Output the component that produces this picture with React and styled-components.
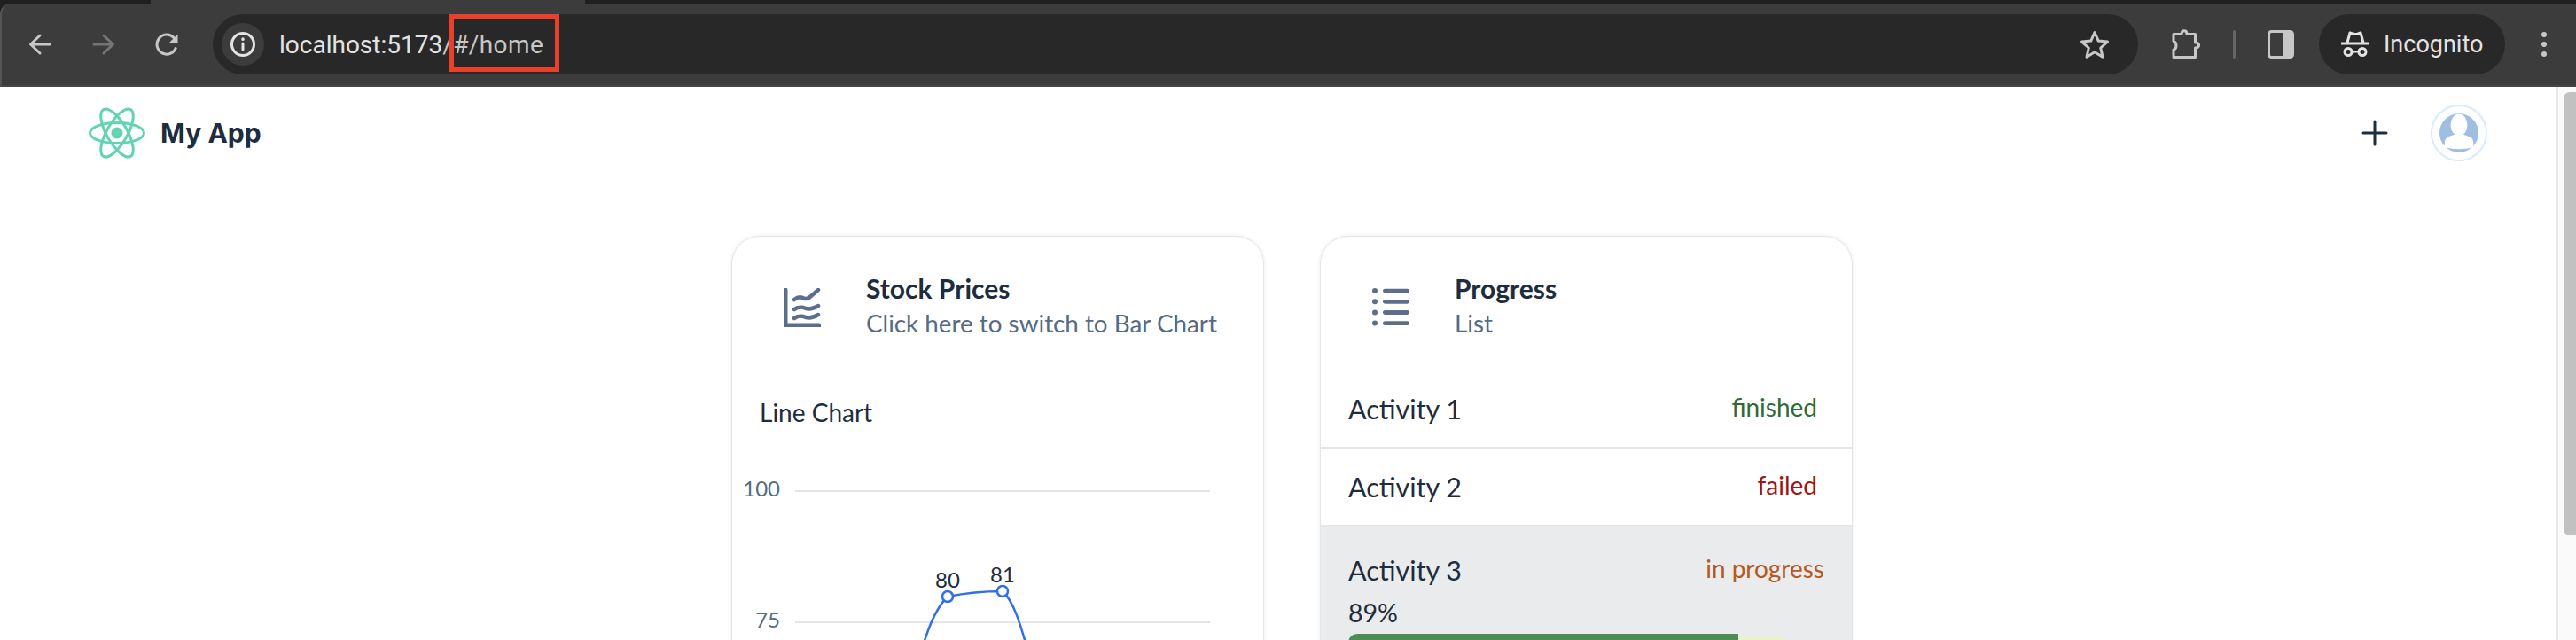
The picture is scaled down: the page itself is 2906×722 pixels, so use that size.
import React from 'react'
import styled, { createGlobalStyle } from 'styled-components'

const GlobalStyle = createGlobalStyle`
  html, body { margin: 0; padding: 0; background: #fff; overflow: hidden; }
  #root { height: 722px; }
`

const Page = styled.div`
  width: 2906px;
  height: 722px;
  overflow: hidden;
  display: flex;
  flex-direction: column;
  font-family: Lato, "Noto Sans", sans-serif;
`

// browser chrome
const Frame = styled.div`
  flex: none;
  background: #1f2120;
`
const TabEdge = styled.div`
  height: 4px;
  margin-left: 170px;
  width: 490px;
  background: #3c3c3c;
`
const Toolbar = styled.div`
  height: 92px;
  background: #3c3c3c;
  border-top-left-radius: 12px;
  border-left: 2px solid #555;
  border-bottom: 2px solid #454545;
  display: flex;
  align-items: center;
  padding-left: 7px;
`
const NavButton = styled.div`
  width: 72px;
  height: 48px;
  display: flex;
  align-items: center;
  justify-content: center;
  flex: none;
`
const Omnibox = styled.div`
  position: relative;
  flex: none;
  width: 2172px;
  height: 68px;
  margin-left: 15px;
  border-radius: 34px;
  background: #282828;
  display: flex;
  align-items: center;
  padding: 0 31px 0 10px;
  box-sizing: border-box;
`
const InfoBadge = styled.div`
  width: 48px;
  height: 48px;
  border-radius: 50%;
  background: #3c3c3c;
  display: flex;
  align-items: center;
  justify-content: center;
`
const Url = styled.div`
  flex: 1;
  margin-left: 17px;
  font-family: Roboto, sans-serif;
  font-size: 28px;
  color: #e3e3e3;
`
const UrlPath = styled.span`
  color: #c7c7c7;
  letter-spacing: 0.4px;
`
const Annotation = styled.div`
  position: absolute;
  left: 267px;
  top: 0;
  width: 124px;
  height: 65px;
  box-sizing: border-box;
  border: 5px solid #e8402a;
`
const ToolIcon = styled.div`
  flex: none;
  display: flex;
  margin-left: ${p => p.$gap}px;
`
const Separator = styled.div`
  flex: none;
  width: 3px;
  height: 32px;
  border-radius: 2px;
  margin-left: 33px;
  background: #666;
`
const IncognitoPill = styled.div`
  flex: none;
  width: 210px;
  height: 68px;
  margin-left: 28px;
  border-radius: 34px;
  background: #282828;
  display: flex;
  align-items: center;
  padding-left: 25px;
  box-sizing: border-box;
  gap: 16px;
  font-family: Roboto, sans-serif;
  font-size: 27px;
  color: #e3e3e3;
`
const Kebab = styled.div`
  flex: none;
  margin-left: 41px;
  display: flex;
  flex-direction: column;
  gap: 5px;
`
const KebabDot = styled.span`
  width: 6px;
  height: 6px;
  border-radius: 50%;
  background: #c7c7c7;
`

// app
const Viewport = styled.div`
  flex: 1;
  min-height: 0;
  display: flex;
`
const Content = styled.div`
  flex: 1;
  min-width: 0;
`
const ScrollTrack = styled.div`
  flex: none;
  width: 22px;
  box-sizing: border-box;
  background: #fafafa;
  border-left: 2px solid #e8e8e8;
  padding: 6px 0 0 6px;
`
const ScrollThumb = styled.div`
  height: 500px;
  border-radius: 7px 0 0 7px;
  background: #c1c1c1;
`
const AppBar = styled.header`
  height: 104px;
  display: flex;
  align-items: center;
  padding: 0 77px 0 100px;
`
const Brand = styled.div`
  flex: 1;
  display: flex;
  align-items: center;
  gap: 17px;
  font-family: Inter, sans-serif;
  font-weight: 700;
  font-size: 30px;
  color: #1d2d3e;
`
const AddButton = styled.div`
  display: flex;
  margin-right: 47px;
`
const Cards = styled.main`
  display: flex;
  gap: 63px;
  padding: 64px 0 0 825px;
`
const Card = styled.section`
  width: 601px;
  height: 700px;
  box-sizing: border-box;
  flex: none;
  border: 1px solid #e4e6e8;
  border-radius: 32px;
  background: #fff;
  box-shadow: 0 0 4px rgba(40, 60, 80, 0.1);
  overflow: hidden;
`
const CardHeader = styled.div`
  display: flex;
  height: 151px;
  box-sizing: border-box;
  padding-top: 38px;
`
const HeaderIcon = styled.div`
  width: 151px;
  flex: none;
  padding: 20px 0 0 58px;
  box-sizing: border-box;
`
const Title = styled.div`
  font-weight: 700;
  font-size: 30px;
  line-height: 40px;
  color: #1d2d3e;
`
const Subtitle = styled.div`
  font-size: 27.8px;
  line-height: 40px;
  color: #556b82;
`
const ChartTitle = styled.div`
  margin: 27px 0 0 31px;
  font-size: 28px;
  line-height: 40px;
  color: #1d2d3e;
`
const ChartArea = styled.svg`
  display: block;
  margin-top: 14px;
`
const Row = styled.div`
  display: flex;
  justify-content: space-between;
  align-items: flex-start;
  height: 88px;
  box-sizing: border-box;
  padding: 23px 39px 0 31px;
  border-bottom: 2px solid #e5e6e8;
`
const ActiveRow = styled.div`
  background: #eaebed;
  padding: 29px 31px 0 31px;
  height: 300px;
`
const RowHead = styled.div`
  display: flex;
  justify-content: space-between;
  align-items: flex-start;
`
const RowName = styled.div`
  font-size: 30.5px;
  line-height: 40px;
  color: #1d2d3e;
`
const Status = styled.div`
  font-size: 28px;
  line-height: 36px;
  color: ${p => p.$color};
`
const Percent = styled.div`
  margin-top: 8px;
  font-size: 28.5px;
  line-height: 40px;
  color: #1d2d3e;
`
const Progress = styled.div`
  margin-top: 4px;
  width: 494px;
  height: 30px;
  position: relative;
  padding-top: 4px;
  box-sizing: border-box;
`
const ProgressTrack = styled.div`
  height: 26px;
  background: #e9f4c4;
  border-radius: 6px 6px 0 0;
`
const ProgressFill = styled.div`
  position: absolute;
  left: 0;
  top: 0;
  bottom: 0;
  background: #4c8c55;
  border-top-left-radius: 10px;
`

const Stroke = ({ w, h, vb, children, sw = 3, color = '#c7c7c7' }) => (
  <svg width={w} height={h} viewBox={vb || `0 0 ${w} ${h}`} fill="none" stroke={color} strokeWidth={sw} strokeLinecap="round" strokeLinejoin="round">
    {children}
  </svg>
)

const ArrowLeft = () => (
  <Stroke w={26} h={26}>
    <path d="M24 13H3M13 3L2.5 13 13 23" />
  </Stroke>
)
const ArrowRight = () => (
  <Stroke w={26} h={26} color="#757575">
    <path d="M2 13h21M13 3l10.5 10L13 23" />
  </Stroke>
)
const Reload = () => (
  <Stroke w={28} h={28}>
    <path d="M23.5 17.5A11 11 0 1 1 21 6.5L24.5 10" strokeLinecap="butt" />
    <path d="M25.5 2.5v9.5h-9.5z" fill="#c7c7c7" strokeWidth={0} />
  </Stroke>
)
const Info = () => (
  <Stroke w={30} h={30}>
    <circle cx={15} cy={15} r={12.5} stroke="#e3e3e3" />
    <path d="M15 14v7" stroke="#e3e3e3" />
    <path d="M15 9v.4" stroke="#e3e3e3" strokeWidth={3.4} />
  </Stroke>
)
const Star = () => (
  <Stroke w={36} h={36}>
    <path d="M18 4.5l4.2 9.6 10.3 1-7.8 6.9 2.3 10.2-9-5.4-9 5.4 2.3-10.2-7.8-6.9 10.3-1z" />
  </Stroke>
)
const Puzzle = () => (
  <Stroke w={38} h={36}>
    <path d="M4 6.5h9c0-5 6-5 6 0h9.5v9.5c5.5-.5 5.5 6.5 0 6v10.5H4V24c4-1 4-8 0-9.5z" />
  </Stroke>
)
const SidePanel = () => (
  <svg width={30} height={32} viewBox="0 0 30 32">
    <rect x={1.5} y={1.5} width={27} height={29} rx={3} fill="none" stroke="#c7c7c7" strokeWidth={3} />
    <path d="M17 1.5h8.5a3 3 0 0 1 3 3v23a3 3 0 0 1-3 3H17z" fill="#c7c7c7" />
  </svg>
)
const Incognito = () => (
  <svg width={32} height={30} viewBox="0 0 32 30" fill="none" stroke="#e3e3e3" strokeWidth={3}>
    <path d="M0 14h32" />
    <path d="M7 13L10 2l4 1.500h4L22 2l3 11" strokeLinejoin="round" />
    <circle cx={8} cy={23.5} r={4} />
    <circle cx={24} cy={23.5} r={4} />
    <path d="M12 23.5h8" strokeWidth={2} />
  </svg>
)

const Atom = () => (
  <svg width={64} height={58} viewBox="-32 -29 64 58" fill="none" stroke="#62d4b4" strokeWidth={3}>
    <ellipse rx={30.5} ry={11.5} />
    <ellipse rx={30.5} ry={11.5} transform="rotate(60)" />
    <ellipse rx={30.5} ry={11.5} transform="rotate(120)" />
    <circle r={6.5} fill="#62d4b4" stroke="none" />
  </svg>
)
const Plus = () => (
  <Stroke w={30} h={30} color="#1d2d3e">
    <path d="M15 2v26M2 15h26" />
  </Stroke>
)
const Avatar = () => (
  <svg width={66} height={66} viewBox="0 0 66 66">
    <circle cx={33} cy={33} r={31} fill="#fff" stroke="#d6ebfb" strokeWidth={2} />
    <circle cx={33} cy={33} r={22} fill="#a0bfe0" />
    <ellipse cx={33} cy={24} rx={9.5} ry={12.5} fill="#fff" />
    <path d="M17 49c-1-8 1-11 6-12.5 3-1 5-1.500 6-2.500h8c1 1 3 1.500 6 2.500 5 1.500 7 4.500 6 12.500-10 3-22 3-32 0z" fill="#fff" />
  </svg>
)
const ChartIcon = () => (
  <Stroke w={42} h={44} color="#5b6f8a" sw={4.5}>
    <path d="M2 2v40h38" strokeWidth={5} />
    <path d="M12 13c5-4 8-3 12-1 4 1 9-5 15-10M12 24c5-3 8-3 13-1 4 1 9 0 14-3M12 34c5-3 8-3 13-1 4 1 9 0 14-3" />
  </Stroke>
)
const ListIcon = () => (
  <svg width={42} height={44} viewBox="0 0 42 44" fill="#5b6f8a">
    {[0, 1, 2, 3].map(i => (
      <g key={i}>
        <circle cx={3} cy={3 + i * 12.2} r={3} />
        <rect x={12} y={0.7 + i * 12.2} width={30} height={4.8} rx={2.4} />
      </g>
    ))}
  </svg>
)

const Chart = () => (
  <ChartArea width={599} height={230}>
    <g stroke="#e5e5e5" strokeWidth={2}>
      <line x1={71} x2={539} y1={55} y2={55} />
      <line x1={71} x2={539} y1={203} y2={203} />
    </g>
    <g fontSize={24} fill="#556b82" textAnchor="end" fontFamily="Lato, sans-serif">
      <text x={54} y={61}>100</text>
      <text x={54} y={209}>75</text>
    </g>
    <path d="M212 240C220 213 228 189 243 174C263 170 284 168 305 168C318 180 325 205 335 240" fill="none" stroke="#2f6fe8" strokeWidth={2.500} />
    <g fill="#fff" stroke="#2f6fe8" strokeWidth={2.500}>
      <circle cx={243} cy={174} r={6} />
      <circle cx={305} cy={168} r={6} />
    </g>
    <g fontSize={24} fill="#1d2d3e" textAnchor="middle" fontFamily="Lato, sans-serif">
      <text x={243} y={164}>80</text>
      <text x={305} y={158}>81</text>
    </g>
  </ChartArea>
)

const App = () => (
  <Page>
    <GlobalStyle />
    <Frame>
      <TabEdge />
      <Toolbar>
        <NavButton><ArrowLeft /></NavButton>
        <NavButton><ArrowRight /></NavButton>
        <NavButton><Reload /></NavButton>
        <Omnibox>
          <InfoBadge><Info /></InfoBadge>
          <Url>localhost:5173<UrlPath>/#/home</UrlPath></Url>
          <Star />
          <Annotation />
        </Omnibox>
        <ToolIcon $gap={36}><Puzzle /></ToolIcon>
        <Separator />
        <ToolIcon $gap={36}><SidePanel /></ToolIcon>
        <IncognitoPill><Incognito />Incognito</IncognitoPill>
        <Kebab><KebabDot /><KebabDot /><KebabDot /></Kebab>
      </Toolbar>
    </Frame>
    <Viewport>
      <Content>
        <AppBar>
          <Brand><Atom />My App</Brand>
          <AddButton><Plus /></AddButton>
          <Avatar />
        </AppBar>
        <Cards>
          <Card>
            <CardHeader>
              <HeaderIcon><ChartIcon /></HeaderIcon>
              <div>
                <Title>Stock Prices</Title>
                <Subtitle>Click here to switch to Bar Chart</Subtitle>
              </div>
            </CardHeader>
            <ChartTitle>Line Chart</ChartTitle>
            <Chart />
          </Card>
          <Card>
            <CardHeader>
              <HeaderIcon><ListIcon /></HeaderIcon>
              <div>
                <Title>Progress</Title>
                <Subtitle>List</Subtitle>
              </div>
            </CardHeader>
            <Row>
              <RowName>Activity 1</RowName>
              <Status $color="#2f6b36">finished</Status>
            </Row>
            <Row>
              <RowName>Activity 2</RowName>
              <Status $color="#a1150f">failed</Status>
            </Row>
            <ActiveRow>
              <RowHead>
                <RowName>Activity 3</RowName>
                <Status $color="#b5591f">in progress</Status>
              </RowHead>
              <Percent>89%</Percent>
              <Progress>
                <ProgressTrack />
                <ProgressFill style={{ width: `${0.89 * 100}%` }} />
              </Progress>
            </ActiveRow>
          </Card>
        </Cards>
      </Content>
      <ScrollTrack><ScrollThumb /></ScrollTrack>
    </Viewport>
  </Page>
)

export default App
